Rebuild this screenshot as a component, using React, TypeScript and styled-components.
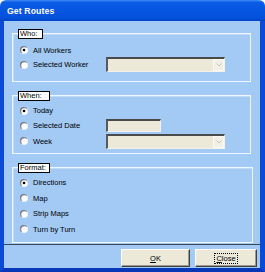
import React from "react";
import styled, { createGlobalStyle } from "styled-components";

const Global = createGlobalStyle`
html, body {
  margin: 0;
  padding: 0;
  background: #ffffff;
}
body {
  font-family: "Liberation Sans", Arial, sans-serif;
}
`;

const Window = styled.div`
width: 265px;
height: 272px;
display: flex;
flex-direction: column;
`;

const TitleBar = styled.div`
height: 21px;
flex: none;
display: flex;
align-items: center;
padding-left: 7px;
border-radius: 6px 6px 0 0;
background: linear-gradient(to bottom, #3d8cf5 0%, #0b5ce6 12%, #0656e2 50%, #0551da 85%, #0343c4 100%);
color: #ffffff;
font-weight: bold;
font-size: 8.7px;
letter-spacing: 0.1px;
`;

const Frame = styled.div`
flex: 1;
display: flex;
border-left: 4px solid #0a4ad6;
border-right: 5px solid #0a4ad6;
border-bottom: 4px solid #0838b8;
`;

const Client = styled.div`
flex: 1;
background: #a3c9f5;
display: flex;
flex-direction: column;
padding-top: 12px;
`;

const GroupBox = styled.div<{ $h: number; $w: number; $mt: number; $pt: number }>`
position: relative;
margin-left: 8px;
margin-top: ${(p) => p.$mt}px;
width: ${(p) => p.$w}px;
height: ${(p) => p.$h}px;
box-sizing: border-box;
border: 1px solid #eef5fd;
box-shadow: inset 1px 1px 0 #c2d9f4;
padding-top: ${(p) => p.$pt}px;
display: flex;
flex-direction: column;
`;

const GroupLabel = styled.div<{ $w: number }>`
position: absolute;
left: 5px;
top: -5px;
width: ${(p) => p.$w}px;
height: 10px;
box-sizing: border-box;
background: #ffffff;
border: 1px solid #000000;
font-size: 7.5px;
line-height: 8px;
padding-left: 1px;
color: #000000;
`;

const Row = styled.div<{ $h: number }>`
height: ${(p) => p.$h}px;
display: grid;
grid-template-columns: 93px 1fr;
align-items: center;
`;

const Choice = styled.div`
display: flex;
align-items: center;
padding-left: 7px;
font-size: 7.5px;
color: #000000;
`;

const RadioMark = styled.svg`
width: 8px;
height: 8px;
flex: none;
margin-right: 5px;
`;

const Combo = styled.div`
width: 119px;
height: 15px;
box-sizing: border-box;
background: #ece9d8;
border-top: 2px solid #4a4a4a;
border-left: 2px solid #5a5a5a;
border-right: 1px solid #f4f2ea;
border-bottom: 1px solid #f4f2ea;
display: flex;
justify-content: flex-end;
`;

const DropButton = styled.div`
width: 11px;
box-sizing: border-box;
background: #f1efe6;
border: 1px solid #faf9f4;
display: flex;
align-items: center;
justify-content: center;
`;

const TextBox = styled.div`
width: 55px;
height: 13px;
box-sizing: border-box;
background: #ece9d8;
border-top: 2px solid #4a4a4a;
border-left: 2px solid #5a5a5a;
border-right: 1px solid #f4f2ea;
border-bottom: 1px solid #f4f2ea;
`;

const Separator = styled.div`
margin-top: 1px;
height: 1px;
background: #3c4652;
`;

const ButtonBar = styled.div`
display: flex;
justify-content: flex-end;
gap: 5px;
padding-right: 3px;
margin-top: 4px;
`;

const Button = styled.div<{ $w: number }>`
width: ${(p) => p.$w}px;
height: 18px;
box-sizing: border-box;
background: #ece9d8;
border-top: 1px solid #ffffff;
border-left: 1px solid #ffffff;
border-right: 1px solid #404040;
border-bottom: 1px solid #404040;
box-shadow: inset -1px -1px 0 #9c9a90;
display: flex;
align-items: center;
justify-content: center;
font-size: 7.5px;
color: #000000;
`;

const Focus = styled.span`
outline: 1px dotted #000000;
outline-offset: 0px;
padding: 0 1px;
`;

const Radio: React.FC<{ checked?: boolean }> = ({ checked }) => (
  <RadioMark viewBox="0 0 8 8">
    <defs>
      <linearGradient id="rg" x1="0" y1="0" x2="1" y2="1">
        <stop offset="0" stopColor="#5a5a5a" />
        <stop offset="0.5" stopColor="#9a9a9a" />
        <stop offset="0.55" stopColor="#e8e8e8" />
        <stop offset="1" stopColor="#ffffff" />
      </linearGradient>
    </defs>
    <circle cx="4" cy="4" r="4" fill="url(#rg)" />
    <circle cx="4.3" cy="4.3" r="3" fill="#ffffff" />
    {checked && <circle cx="4" cy="4" r="1.3" fill="#000000" />}
  </RadioMark>
);

const Chevron = () => (
  <svg width="6" height="4" viewBox="0 0 6 4">
    <path d="M0.5 0.5 L3 3 L5.5 0.5" stroke="#c6c2b6" strokeWidth="1" fill="none" />
  </svg>
);

const ComboBox = () => (
  <Combo>
    <DropButton>
      <Chevron />
    </DropButton>
  </Combo>
);

export default function App() {
  return (
    <Window>
      <Global />
      <TitleBar>Get Routes</TitleBar>
      <Frame>
        <Client>
          <GroupBox $h={49} $w={239} $mt={0} $pt={9}>
            <GroupLabel $w={25}>Who:</GroupLabel>
            <Row $h={14}>
              <Choice>
                <Radio checked />
                All Workers
              </Choice>
            </Row>
            <Row $h={15}>
              <Choice>
                <Radio />
                Selected Worker
              </Choice>
              <ComboBox />
            </Row>
          </GroupBox>

          <GroupBox $h={59} $w={239} $mt={13} $pt={7}>
            <GroupLabel $w={32}>When:</GroupLabel>
            <Row $h={15}>
              <Choice>
                <Radio checked />
                Today
              </Choice>
            </Row>
            <Row $h={15}>
              <Choice>
                <Radio />
                Selected Date
              </Choice>
              <TextBox />
            </Row>
            <Row $h={16}>
              <Choice>
                <Radio />
                Week
              </Choice>
              <ComboBox />
            </Row>
          </GroupBox>

          <GroupBox $h={76} $w={241} $mt={13} $pt={7}>
            <GroupLabel $w={32}>Format:</GroupLabel>
            <Row $h={15.5}>
              <Choice>
                <Radio checked />
                Directions
              </Choice>
            </Row>
            <Row $h={15.5}>
              <Choice>
                <Radio />
                Map
              </Choice>
            </Row>
            <Row $h={15.5}>
              <Choice>
                <Radio />
                Strip Maps
              </Choice>
            </Row>
            <Row $h={15.5}>
              <Choice>
                <Radio />
                Turn by Turn
              </Choice>
            </Row>
          </GroupBox>

          <Separator />
          <ButtonBar>
            <Button $w={69}>
              <span>
                <u>O</u>K
              </span>
            </Button>
            <Button $w={62}>
              <Focus>
                <u>C</u>lose
              </Focus>
            </Button>
          </ButtonBar>
        </Client>
      </Frame>
    </Window>
  );
}
